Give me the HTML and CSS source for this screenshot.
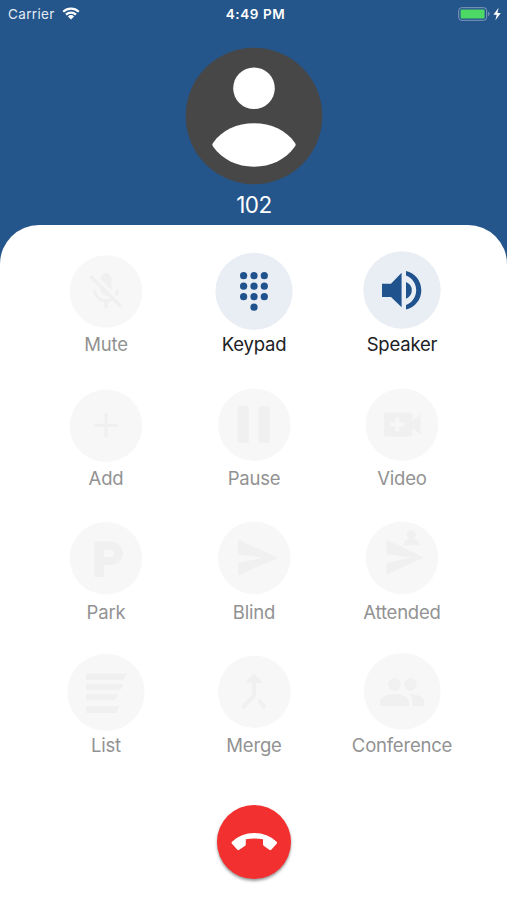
FILE: index.html
```html
<!DOCTYPE html>
<html lang="en">
<head>
    <meta charset="UTF-8">
    <meta name="viewport" content="width=device-width, initial-scale=1.0">
    <title>Call</title>
    <link rel="stylesheet" href="styles.css">
</head>
<body>
    <div class="phone">
        <div class="status-bar">
            <div class="carrier">
                <span>Carrier</span>
                <svg width="18" height="13" viewBox="0 0 18 13">
                    <path d="M1.2 4.7a11.3 11.3 0 0 1 15.6 0M4 7.6a7.3 7.3 0 0 1 10 0" fill="none" stroke="#fff" stroke-width="2.2"/>
                    <path d="M9 12.4L5.9 9.4a4.4 4.4 0 0 1 6.2 0z" fill="#fff"/>
                </svg>
            </div>
            <span class="time">4:49 PM</span>
            <div class="battery">
                <svg width="44" height="14" viewBox="0 0 44 14">
                    <rect x=".7" y=".7" width="28" height="12.6" rx="3" fill="none" stroke="#7f9cbc"/>
                    <rect x="2.6" y="2.5" width="24" height="9" rx="1.2" fill="#4cd964"/>
                    <path d="M30.2 4.8c1.8.5 1.8 3.9 0 4.4z" fill="#7f9cbc"/>
                    <path d="M40.6.8L35.4 7.8h3.3l-1.3 5.4 5.4-7.2h-3.4z" fill="#fff"/>
                </svg>
            </div>
        </div>

        <header class="caller">
            <svg class="avatar" width="138" height="138" viewBox="0 0 138 138">
                <circle cx="69" cy="69" r="68.3" fill="#474747"/>
                <circle cx="69" cy="41.2" r="20.8" fill="#fff"/>
                <path d="M28 96C37 83 52 76.300 69 76.300S101 83 110 96c1 1.500.8 2.300-.2 3.800C100 113 86 119.700 69 119.700S38 113 28.200 99.800c-1-1.500-1.200-2.300-.2-3.800z" fill="#fff"/>
            </svg>
            <h1>102</h1>
        </header>

        <main class="panel">
            <div class="actions">
                <button class="action">
                    <svg viewBox="0 0 78 78">
                        <circle class="disc" cx="39" cy="39.500" r="36.300"/>
                        <path transform="translate(16.800 17.500) scale(1.850)" d="M19 11h-1.700c0 .74-.16 1.430-.43 2.050l1.230 1.230c.56-.98.9-2.090.9-3.280zm-4.020.17c0-.06.02-.11.02-.17V5c0-1.660-1.340-3-3-3S9 3.340 9 5v.18l5.980 5.990zM4.270 3L3 4.270l6.010 6.010V11c0 1.660 1.330 3 2.990 3 .22 0 .44-.03.65-.08l1.660 1.660c-.71.33-1.500.52-2.310.52-2.760 0-5.300-2.100-5.300-5.100H5c0 3.410 2.720 6.230 6 6.720V21h2v-3.280c.91-.13 1.770-.45 2.540-.9L19.730 21 21 19.730 4.270 3z"/>
                    </svg>
                    <span>Mute</span>
                </button>
                <button class="action active">
                    <svg viewBox="0 0 78 78">
                        <circle class="disc" cx="39" cy="39.300" r="38.600"/>
                        <circle cx="28.600" cy="23.700" r="3.600"/>
                        <circle cx="39" cy="23.700" r="3.600"/>
                        <circle cx="49.300" cy="23.700" r="3.600"/>
                        <circle cx="28.600" cy="34.200" r="3.600"/>
                        <circle cx="39" cy="34.200" r="3.600"/>
                        <circle cx="49.300" cy="34.200" r="3.600"/>
                        <circle cx="28.600" cy="44.700" r="3.600"/>
                        <circle cx="39" cy="44.700" r="3.600"/>
                        <circle cx="49.300" cy="44.700" r="3.600"/>
                        <circle cx="39" cy="55.200" r="3.600"/>
                    </svg>
                    <span>Keypad</span>
                </button>
                <button class="action active">
                    <svg viewBox="0 0 78 78">
                        <circle class="disc" cx="39" cy="38" r="38.700"/>
                        <path d="M19 31.700h9L38.600 20.800v34.500L28 45H19zM43 30q5.800 2.400 5.800 8.300T43 46.800zM43 19.100C52 21 58.300 29 58.300 38.300S52 55.600 43 57.400V53c6-2 10.200-8 10.200-14.700S49 25.500 43 23.500z"/>
                    </svg>
                    <span>Speaker</span>
                </button>

                <button class="action">
                    <svg viewBox="0 0 78 78">
                        <circle class="disc" cx="39" cy="39.800" r="36.300"/>
                        <path d="M37.500 27.300h3v10.500H51v3H40.500v10.500h-3V40.800H27v-3h10.500z"/>
                    </svg>
                    <span>Add</span>
                </button>
                <button class="action">
                    <svg viewBox="0 0 78 78">
                        <circle class="disc" cx="39.300" cy="38.800" r="36.300"/>
                        <rect x="22.500" y="20" width="11.500" height="37" rx="3"/>
                        <rect x="43.500" y="20" width="11.500" height="37" rx="3"/>
                    </svg>
                    <span>Pause</span>
                </button>
                <button class="action">
                    <svg viewBox="0 0 78 78">
                        <circle class="disc" cx="39" cy="38.800" r="36.300"/>
                        <path fill-rule="evenodd" d="M23 26.500h24q2.500 0 2.500 2.500v6l8-7v21l-8-7v6q0 2.500-2.500 2.500H23q-2-.2-2-2.500V29q0-2.500 2-2.500zM32.300 31.500v5h-5.300v4h5.300v5h4v-5h5.300v-4h-5.300v-5z"/>
                    </svg>
                    <span>Video</span>
                </button>

                <button class="action">
                    <svg viewBox="0 0 78 78">
                        <circle class="disc" cx="39" cy="39.300" r="36.300"/>
                        <path fill-rule="evenodd" d="M27.500 22.500H43.500C51 22.500 56 27.500 56 34S51 46 43.500 46H37v12h-9.500zM37 31v7h6.500q3.500 0 3.500-3.500T43.500 31z"/>
                    </svg>
                    <span>Park</span>
                </button>
                <button class="action">
                    <svg viewBox="0 0 78 78">
                        <circle class="disc" cx="39.200" cy="38.900" r="36.300"/>
                        <path d="M23 20.600L63 38.700 23 56.600V44L48 38.700 23 35.500z"/>
                    </svg>
                    <span>Blind</span>
                </button>
                <button class="action">
                    <svg viewBox="0 0 78 78">
                        <circle class="disc" cx="39" cy="38.900" r="36.300"/>
                        <path d="M23.500 20.500L61 38.600 23.500 55.500V44L48 38.600 23.500 35z"/>
                        <circle cx="48.500" cy="15.800" r="4.500"/>
                        <path d="M40.500 26.300q.5-6.500 8-7 7.500.5 8 7z"/>
                    </svg>
                    <span>Attended</span>
                </button>

                <button class="action">
                    <svg viewBox="0 0 78 78">
                        <circle class="disc" cx="39" cy="39.400" r="38.600"/>
                        <path d="M19 20.500h41l-4 6.500H19zM19 30.700h37l-2.500 6H19zM19 41.200h32l-3 6H19zM19 53h33l-2.500 7H19z"/>
                    </svg>
                    <span>List</span>
                </button>
                <button class="action">
                    <svg viewBox="0 0 78 78">
                        <circle class="disc" cx="39.300" cy="38.800" r="36.300"/>
                        <path transform="translate(15 12.900) scale(2 2.120)" d="M17 20.410L18.410 19 15 15.590 13.590 17 17 20.410zM7.500 8H11v5.590L5.590 19 7 20.410l6-6V8h3.500L12 3.500 7.500 8z"/>
                    </svg>
                    <span>Merge</span>
                </button>
                <button class="action">
                    <svg viewBox="0 0 78 78">
                        <circle class="disc" cx="39.300" cy="38.300" r="38.400"/>
                        <circle cx="31.500" cy="31.500" r="6.200"/>
                        <circle cx="47.500" cy="31.500" r="6.200"/>
                        <path d="M17 53v-3.500C17 44 24 41 31.500 41S46 44 46 49.500V53zM47 41c8 0 14.500 3 14.500 8.500V53H49.500v-3.500c0-4-1.500-6.500-4-8.400z"/>
                    </svg>
                    <span>Conference</span>
                </button>
            </div>

            <button class="hang-up">
                <svg width="74" height="74" viewBox="0 0 74 74">
                    <path d="M15 36.800Q24 28 37.300 28T59.600 36.800Q60.600 37.800 59.600 38.800L54.500 44.600Q53.500 45.700 52.300 44.800L47 41Q46 40.300 46 39.200V34.200Q37.300 32.600 28.800 34.200V39.200Q28.800 40.300 27.800 41L22.300 44.800Q21.100 45.700 20.100 44.600L15 38.800Q14 37.800 15 36.800z" fill="#fff"/>
                </svg>
            </button>
        </main>
    </div>
</body>
</html>
```
FILE: styles.css
```css
* {
    margin: 0;
    padding: 0;
    box-sizing: border-box;
}

body {
    font-family: 'Inter', 'Roboto', sans-serif;
    background-color: #25568b;
}

.phone {
    display: flex;
    flex-direction: column;
    height: 900px;
    overflow: hidden;
}

.status-bar {
    display: grid;
    grid-template-columns: 1fr auto 1fr;
    align-items: center;
    height: 27px;
    padding: 0 5px 0 8px;
    color: #fff;
    font-size: 13.5px;
}

.carrier {
    display: flex;
    align-items: center;
    gap: 7px;
    color: #e4ebf3;
    letter-spacing: 0.35px;
}

.time {
    font-size: 13.5px;
    font-weight: 600;
    letter-spacing: 0.55px;
    padding-left: 1px;
}

.battery {
    display: flex;
    justify-content: flex-end;
}

.caller {
    display: flex;
    flex-direction: column;
    align-items: center;
    height: 198px;
    padding: 20px 0 0 1px;
}

.avatar {
    flex: none;
}

h1 {
    color: #fff;
    font-size: 22.5px;
    font-weight: 400;
    line-height: 28px;
    margin-top: 6px;
    letter-spacing: -0.5px;
}

.panel {
    flex: 1;
    display: flex;
    flex-direction: column;
    align-items: center;
    background-color: #fff;
    border-radius: 39px 39px 0 0;
    padding: 27px 0 0 1px;
}

.actions {
    display: grid;
    grid-template-columns: repeat(3, 148px);
    grid-auto-rows: 133.7px;
}

button {
    border: none;
    background: none;
    font-family: inherit;
    cursor: pointer;
}

.action {
    display: flex;
    flex-direction: column;
    align-items: center;
    color: #929292;
    font-size: 18.5px;
    line-height: 24px;
    letter-spacing: -0.2px;
}

.action svg {
    width: 78px;
    height: 78px;
    margin-bottom: 2.4px;
    overflow: visible;
    fill: #f0f0f0;
}

.action .disc {
    fill: #f7f7f7;
}

.action.active {
    color: #202124;
}

.action.active svg {
    fill: #20538d;
}

.action.active .disc {
    fill: #e9edf4;
}

.hang-up {
    width: 74px;
    height: 74px;
    margin-top: 18px;
    border-radius: 50%;
    background-color: #f23030;
    box-shadow: 0 2px 3px rgba(0, 0, 0, 0.4);
}
```
